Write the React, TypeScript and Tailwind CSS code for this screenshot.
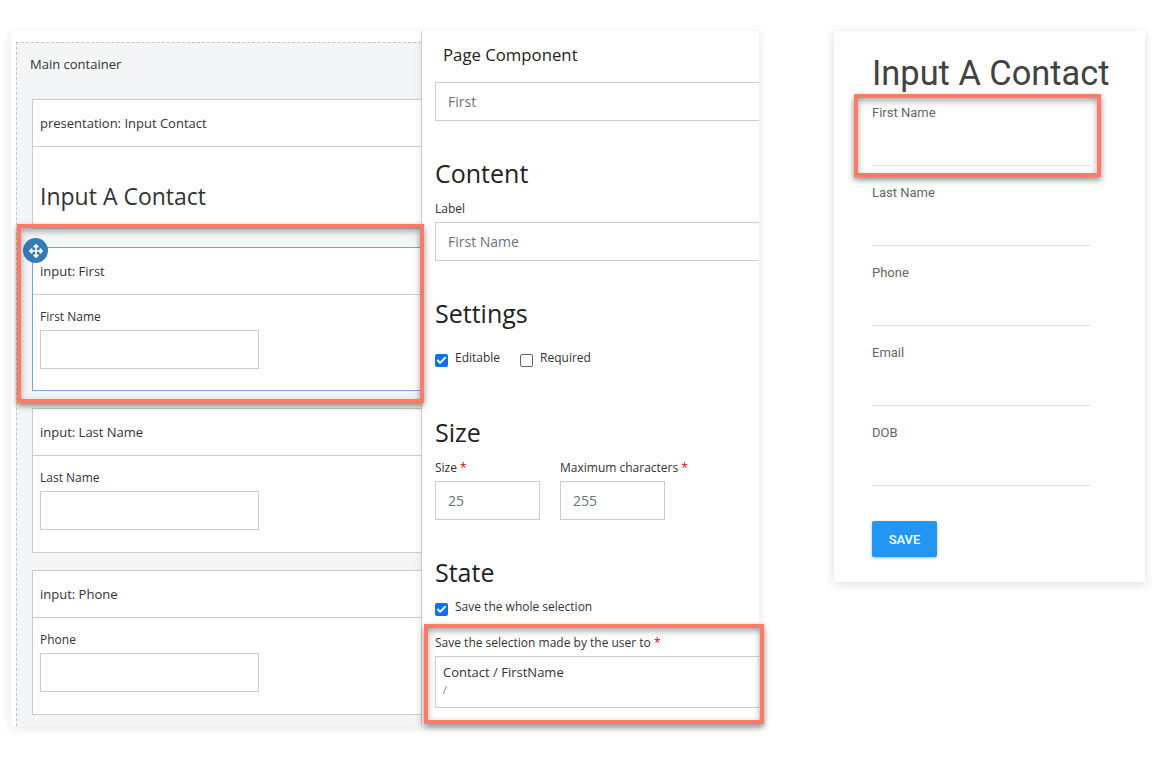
import { FaArrowsAlt } from 'react-icons/fa'
import { Check } from 'lucide-react'

function FieldCard({ title, label, className }: { title: string; label: string; className: string }) {
  return (
    <div className={`border border-r-0 bg-white ${className}`}>
      <div className="flex h-[47px] items-center border-b border-[#cccccc] pl-[7px] pt-[2px] text-[13px] text-[#333]">{title}</div>
      <div className="pl-[7px] pt-[13px]">
        <div className="h-[17px] text-[12px] leading-[17px] text-[#333]">{label}</div>
        <div className="mt-[5px] h-[39px] w-[219px] border border-[#cccccc] bg-white" />
      </div>
    </div>
  )
}

function SideInput({ value, className }: { value: string; className: string }) {
  return (
    <div className={`flex h-[39px] items-center border border-[#cccccc] pl-[12px] text-[14px] text-[#6b7280] ${className}`}>
      {value}
    </div>
  )
}

function Tick({ on }: { on: boolean }) {
  if (!on) return <span className="h-[13px] w-[13px] rounded-[2px] border border-[#666] bg-white" />
  return (
    <span className="flex h-[13px] w-[13px] items-center justify-center rounded-[2px] bg-[#0b72f0]">
      <Check className="h-[11px] w-[11px] text-white" strokeWidth={4} />
    </span>
  )
}

function Heading({ children, className }: { children: string; className: string }) {
  return <h2 className={`h-[33px] text-[25px] leading-[33px] text-[#222] ${className}`}>{children}</h2>
}

function Required() {
  return <span className="text-[#e00000]"> *</span>
}

function PreviewField({ label }: { label: string }) {
  return (
    <div className="h-[80px] text-[13px] leading-[14px] text-[#666]">
      <div className="pt-[5px]">{label}</div>
      <div className="mt-[45px] h-px w-[218px] bg-[#dddddd]" />
    </div>
  )
}

export default function App() {
  return (
    <div className="relative flex h-[758px] w-[1152px] items-start overflow-hidden bg-white pl-[11px] pt-[31px] font-['Open_Sans',sans-serif]">
      {/* editor canvas */}
      <div className="h-[695px] w-[411px] shrink-0 overflow-hidden border-r border-[#d4d4d4] bg-white pl-[5px] pt-[11px] shadow-[0_2px_10px_rgba(0,0,0,0.1)]">
        <div className="h-[684px] border-l border-t border-dashed border-[#c4c4c4] bg-[#f4f5f6] pl-[15px]">
          <div className="-ml-[2px] flex h-[43px] items-center text-[13px] text-[#333]">
            <span className="pt-[1px]">Main container</span>
          </div>
          <div className="mt-[13px] h-[130px] border border-r-0 border-[#cccccc] bg-white">
            <div className="flex h-[47px] items-center border-b border-[#cccccc] pl-[7px] pt-[2px] text-[13px] text-[#333]">
              presentation: Input Contact
            </div>
            <div className="pl-[7px] pt-[33px] text-[23px] leading-[33px] text-[#333]">Input A Contact</div>
          </div>
          <div className="relative mt-[18px]">
            <FieldCard title="input: First" label="First Name" className="h-[144px] border-[#7f9fe8]" />
            <span className="absolute -left-[9px] -top-[9px] flex h-[25px] w-[25px] items-center justify-center rounded-full bg-[#337ab7]">
              <FaArrowsAlt className="h-[14px] w-[14px] text-white" />
            </span>
          </div>
          <FieldCard title="input: Last Name" label="Last Name" className="mt-[17px] h-[145px] border-[#cccccc]" />
          <FieldCard title="input: Phone" label="Phone" className="mt-[17px] h-[145px] border-[#cccccc]" />
        </div>
      </div>

      {/* properties panel */}
      <div className="h-[695px] w-[337px] shrink-0 bg-white pl-[13px] shadow-[0_2px_10px_rgba(0,0,0,0.1)]">
        <div className="flex h-[51px] items-center pb-[3px] pl-[8px] text-[16.75px] text-[#222]">Page Component</div>
        <SideInput value="First" className="border-r-0" />
        <Heading className="mt-[36px]">Content</Heading>
        <div className="mt-[10px] h-[17px] text-[12px] leading-[17px] text-[#333]">Label</div>
        <SideInput value="First Name" className="mt-[5px] border-r-0" />
        <Heading className="mt-[36px]">Settings</Heading>
        <div className="mt-[19px] flex h-[20px] items-center text-[12px] text-[#333]">
          <span className="mt-[3px] flex"><Tick on /></span>
          <span className="ml-[7px] -mt-[2px]">Editable</span>
          <span className="ml-[20px] mt-[3px] flex"><Tick on={false} /></span>
          <span className="ml-[7px] -mt-[2px]">Required</span>
        </div>
        <Heading className="mt-[47px]">Size</Heading>
        <div className="mt-[10px] flex gap-[20px]">
          <div className="w-[105px]">
            <div className="h-[17px] text-[12px] leading-[17px] text-[#333]">Size<Required /></div>
            <SideInput value="25" className="mt-[5px]" />
          </div>
          <div className="w-[105px]">
            <div className="h-[17px] whitespace-nowrap text-[12px] leading-[17px] text-[#333]">Maximum characters<Required /></div>
            <SideInput value="255" className="mt-[5px]" />
          </div>
        </div>
        <Heading className="mt-[36px]">State</Heading>
        <div className="mt-[9px] flex h-[20px] items-center text-[12px] text-[#333]">
          <span className="mt-[2px] flex"><Tick on /></span>
          <span className="ml-[7px] -mt-[2px]">Save the whole selection</span>
        </div>
        <div className="mt-[16px] h-[17px] text-[12px] leading-[17px] text-[#333]">Save the selection made by the user to<Required /></div>
        <div className="mt-[5px] h-[52px] border border-r-0 border-[#cccccc] pl-[7px] pt-[6px]">
          <div className="text-[13px] leading-[18px] text-[#333]">Contact / FirstName</div>
          <div className="mt-[2px] text-[10px] leading-[14px] text-[#777]">/</div>
        </div>
      </div>

      {/* rendered form preview */}
      <div className="ml-[75px] h-[551px] w-[311px] shrink-0 bg-white pl-[38px] font-['Roboto',sans-serif] shadow-[0_2px_10px_rgba(0,0,0,0.14)]">
        <h1 className="flex h-[70px] items-center whitespace-nowrap pt-[16px] text-[34.4px] text-[#424242]">Input A Contact</h1>
        <PreviewField label="First Name" />
        <PreviewField label="Last Name" />
        <PreviewField label="Phone" />
        <PreviewField label="Email" />
        <PreviewField label="DOB" />
        <button className="mt-[20px] h-[36px] w-[65px] rounded-[2px] bg-[#2196f3] pt-[1px] text-[13px] font-medium text-white shadow-[0_1px_3px_rgba(0,0,0,0.3)]">
          SAVE
        </button>
      </div>

      {/* annotation boxes */}
      <div className="pointer-events-none absolute left-[17px] top-[224px] h-[179px] w-[407px] border-[4px] border-[#ff7b67] shadow-[0_3px_6px_rgba(0,0,0,0.45),inset_0_3px_6px_rgba(0,0,0,0.35)]" />
      <div className="pointer-events-none absolute left-[424px] top-[624px] h-[100px] w-[340px] border-[4px] border-[#ff7b67] shadow-[0_3px_6px_rgba(0,0,0,0.45),inset_0_3px_6px_rgba(0,0,0,0.35)]" />
      <div className="pointer-events-none absolute left-[854px] top-[94px] h-[83px] w-[247px] border-[4px] border-[#ff7b67] shadow-[0_3px_6px_rgba(0,0,0,0.45),inset_0_3px_6px_rgba(0,0,0,0.35)]" />
    </div>
  )
}
